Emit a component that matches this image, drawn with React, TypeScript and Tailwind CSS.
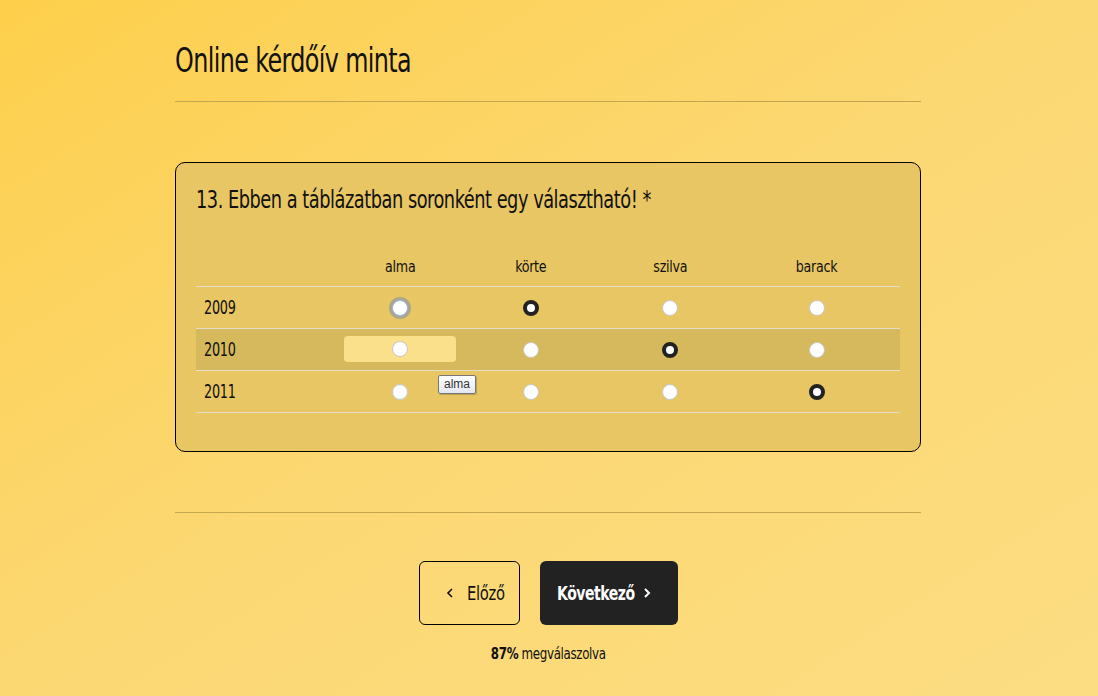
import { useState } from "react";

const COLS = [
    { label: "alma", w: "w-[112px]" },
    { label: "körte", w: "w-[150px]" },
    { label: "szilva", w: "w-[128px]" },
    { label: "barack", w: "w-[166px]" },
];

const ROWS = ["2009", "2010", "2011"];

const font = { fontFamily: '"DejaVu Sans Condensed", "Liberation Sans Narrow", "Roboto", sans-serif' };

function Radio({ checked, focused }: { checked: boolean; focused?: boolean }) {
    if (checked) {
        return (
            <span className="inline-block w-4 h-4 rounded-full border-[4px] border-[#222] bg-white align-middle" />
        );
    }
    return (
        <span
            className={
                "inline-block w-4 h-4 rounded-full bg-white border align-middle " +
                (focused ? "border-[#9db8dc] ring-[3px] ring-[#aaa68e]" : "border-[#c8c8c8]")
            }
        />
    );
}

export default function App() {
    const [answers] = useState<Record<string, number>>({
        "2009": 1,
        "2010": 2,
        "2011": 3,
    });

    return (
        <div
            className="min-h-[696px] w-full bg-gradient-to-br from-[#fdcf4a] via-[#fcd873] to-[#fcdd82] text-[#111]"
            style={font}
        >
            <div className="w-[748px] pr-[2px] mx-auto pt-[38px]">
                <h1 className="text-[34px] leading-[44px] tracking-[-0.8px] scale-x-[0.78] origin-left whitespace-nowrap">
                    Online kérdőív minta
                </h1>
                <div className="mt-[19px] h-px bg-[#c4a650]" />

                <div className="mt-[60px] rounded-[10px] border border-black bg-[#e8c664] px-5 pt-[22px] pb-[38px]">
                    <h2 className="text-[25px] leading-[30px] tracking-[-0.6px] scale-x-[0.79] origin-left whitespace-nowrap">
                        13. Ebben a táblázatban soronként egy választható! *
                    </h2>

                    <table className="mt-[40px] border-collapse text-[16px] tracking-[-0.3px]">
                        <thead>
                            <tr className="border-b border-[#e3ddc9]">
                                <th className="w-[148px]" />
                                {COLS.map((c) => (
                                    <th key={c.label} className={c.w + " h-[31px] font-normal text-center align-top"}>
                                        <span className="inline-block scale-x-[0.88]">{c.label}</span>
                                    </th>
                                ))}
                            </tr>
                        </thead>
                        <tbody>
                            {ROWS.map((year) => (
                                <tr
                                    key={year}
                                    className={
                                        "border-b border-[#e3ddc9] h-[42px] " +
                                        (year === "2010" ? "bg-[#d6b95c]" : "")
                                    }
                                >
                                    <td className="pl-2 text-[19px]">
                                        <span className="inline-block scale-x-[0.75] origin-left">{year}</span>
                                    </td>
                                    {COLS.map((c, i) => (
                                        <td key={c.label} className="text-center relative">
                                            {year === "2010" && i === 0 ? (
                                                <div className="mx-auto w-[112px] h-[26px] rounded-[4px] bg-[#fbe08b] flex items-center justify-center">
                                                    <Radio checked={false} />
                                                </div>
                                            ) : (
                                                <Radio
                                                    checked={answers[year] === i}
                                                    focused={year === "2009" && i === 0}
                                                />
                                            )}
                                            {year === "2011" && i === 0 && (
                                                <span
                                                    className="absolute left-[94px] top-[4px] px-[5px] h-[19px] leading-[17px] text-[12px] text-[#333] border border-[#767676] rounded-[2px] bg-gradient-to-b from-white to-[#e4e7ef] shadow-[1px_1px_1px_rgba(0,0,0,0.2)]"
                                                    style={{ fontFamily: '"Liberation Sans", Arial, sans-serif', letterSpacing: 0 }}
                                                >
                                                    alma
                                                </span>
                                            )}
                                        </td>
                                    ))}
                                </tr>
                            ))}
                        </tbody>
                    </table>
                </div>

                <div className="mt-[60px] h-px bg-[#c4a650]" />

                <div className="mt-[48px] flex justify-center gap-5">
                    <button className="w-[101px] h-[64px] rounded-[6px] border border-black flex items-center pl-[26px] gap-[13px] text-[20px] tracking-[-0.4px]">
                        <svg width="8" height="12" viewBox="0 0 8 12" fill="none" stroke="#111" strokeWidth="1.6">
                            <path d="M6 2 L2 6 L6 10" />
                        </svg>
                        <span className="inline-block scale-x-[0.82] origin-left whitespace-nowrap">Előző</span>
                    </button>
                    <button className="relative w-[138px] h-[64px] rounded-[6px] bg-[#222] text-white font-bold flex items-center pl-[17px] text-[20px] tracking-[-0.6px]">
                        <span className="inline-block scale-x-[0.78] origin-left whitespace-nowrap">Következő</span>
                        <svg className="absolute left-[103px] top-[26px]" width="8" height="12" viewBox="0 0 8 12" fill="none" stroke="#fff" strokeWidth="2">
                            <path d="M2 2 L6 6 L2 10" />
                        </svg>
                    </button>
                </div>

                <p className="mt-[18px] text-center text-[15px] tracking-[-0.4px]">
                    <span className="inline-block scale-x-[0.88]">
                        <b>87%</b> megválaszolva
                    </span>
                </p>
            </div>
        </div>
    );
}
